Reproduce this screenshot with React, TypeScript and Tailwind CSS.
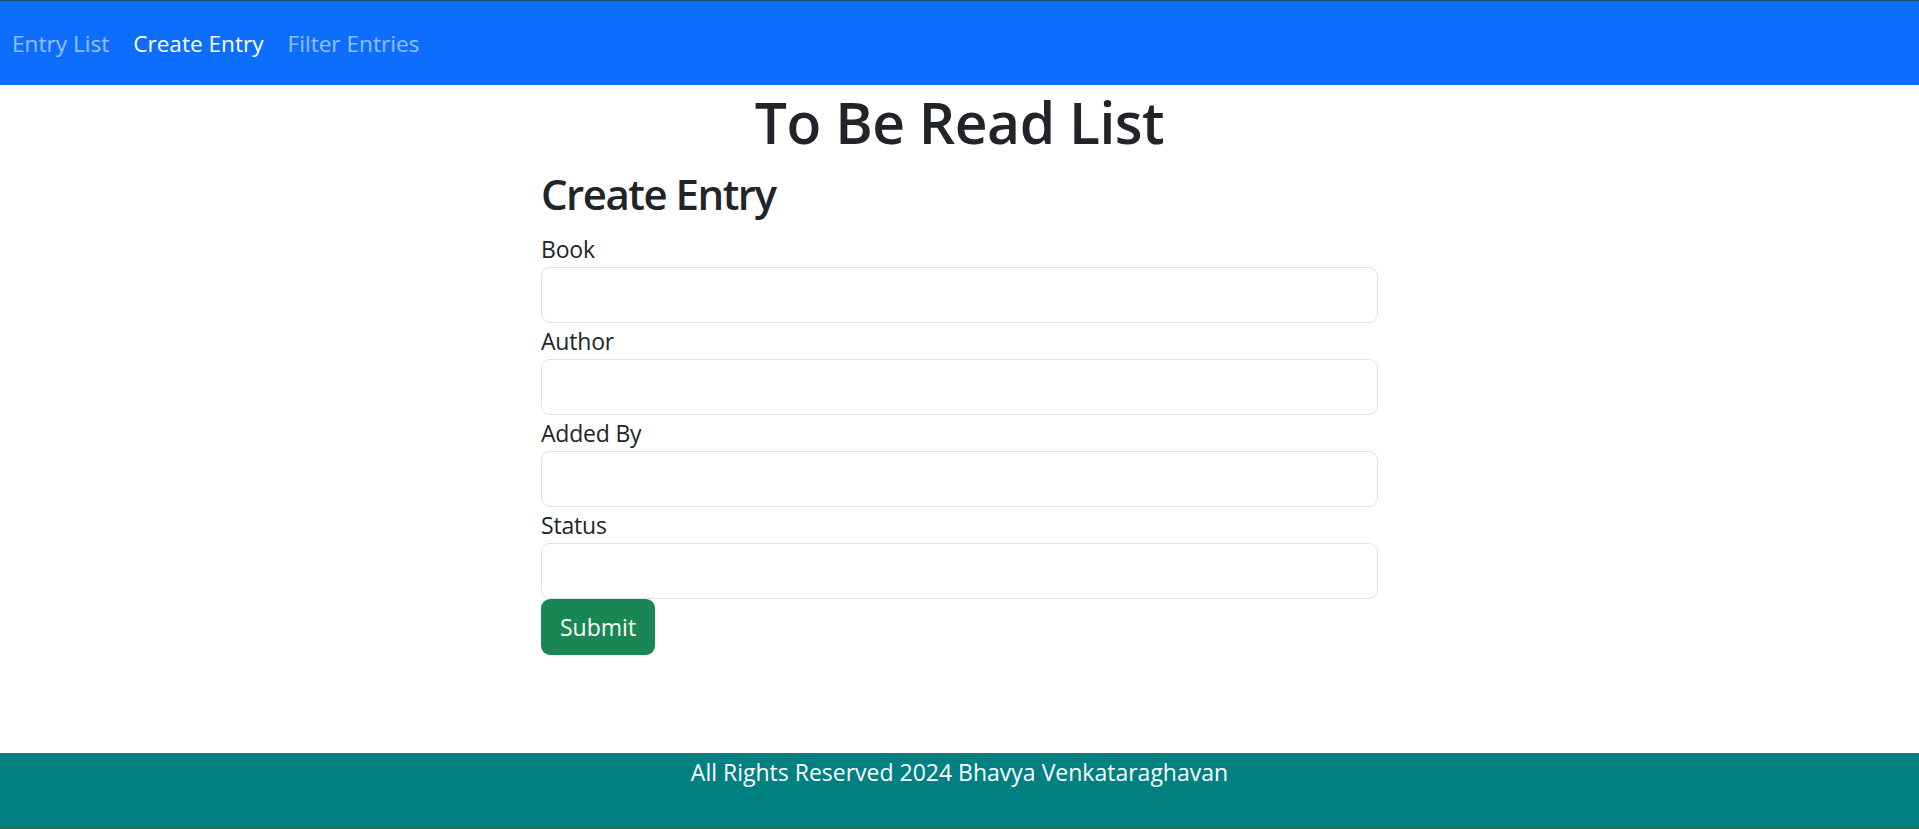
import { useState } from "react";

const fields = ["Book", "Author", "Added By", "Status"];

function NavBar() {
  return (
    <nav className="h-[85px] border-t border-[#14506a] bg-[#0d6efd]">
      <ul className="flex h-full items-center pt-[2px]">
        <li className="px-3 text-[22.6px] text-white/55">Entry List</li>
        <li className="px-3 text-[22.6px] text-white">Create Entry</li>
        <li className="px-3 text-[22.6px] text-white/55">Filter Entries</li>
      </ul>
    </nav>
  );
}

function CreateEntryForm() {
  const [values, setValues] = useState<Record<string, string>>({});

  return (
    <form className="mx-auto w-[837px]" onSubmit={(e) => e.preventDefault()}>
      <h2 className="mt-[13px] mb-[11px] text-[42px] leading-[1.2] font-semibold tracking-[-1.5px]">
        Create Entry
      </h2>
      {fields.map((f) => (
        <div key={f}>
          <label className="block text-[23px] leading-[36px] tracking-[-0.2px]">{f}</label>
          <input
            className="block h-[56px] w-full rounded-[9px] border border-[#dee2e6] bg-white px-[18px] text-[22px] outline-none"
            value={values[f] ?? ""}
            onChange={(e) => setValues({ ...values, [f]: e.target.value })}
          />
        </div>
      ))}
      <button
        type="submit"
        className="h-[56px] rounded-[9px] bg-[#198754] px-[19px] text-[23px] text-white"
      >
        Submit
      </button>
    </form>
  );
}

export default function App() {
  return (
    <div
      className="flex h-[829px] flex-col bg-white text-[#212529]"
      style={{ fontFamily: '"Open Sans", "Noto Sans", sans-serif' }}
    >
      <NavBar />
      <main className="flex-1">
        <h1 className="mt-[3px] text-center text-[57px] leading-[1.2] font-semibold tracking-[-0.5px]">
          To Be Read List
        </h1>
        <CreateEntryForm />
      </main>
      <footer className="h-[76px] border-b-2 border-[#3d5c5c] bg-[#008080] pt-[1px] text-center text-[23px] leading-[36px] text-white">
        All Rights Reserved 2024 Bhavya Venkataraghavan
      </footer>
    </div>
  );
}
